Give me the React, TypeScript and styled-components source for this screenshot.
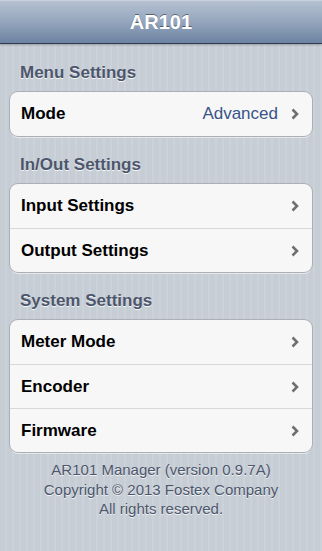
import React from 'react';
import styled, { createGlobalStyle } from 'styled-components';

const GlobalStyle = createGlobalStyle`
  html, body {
    margin: 0;
    padding: 0;
  }
  body {
    font-family: "Liberation Sans", Arial, sans-serif;
    -webkit-font-smoothing: antialiased;
  }
`;

const Screen = styled.div`
  width: 322px;
  height: 551px;
  overflow: hidden;
  display: flex;
  flex-direction: column;
  background: repeating-linear-gradient(
    90deg,
    #c6cdd5 0px,
    #c6cdd5 5px,
    #ccd2d9 5px,
    #ccd2d9 7px
  );
`;

const NavBar = styled.header`
  height: 44px;
  flex: none;
  box-sizing: border-box;
  display: flex;
  align-items: center;
  justify-content: center;
  background: linear-gradient(to bottom, #b5c1d1 0%, #94a5bd 50%, #6c83a2 100%);
  border-top: 1px solid #c8d1dd;
  border-bottom: 1px solid #2f3c50;
  box-shadow: 0 1px 2px rgba(0, 0, 0, 0.25);
`;

const Title = styled.h1`
  margin: 0;
  font-size: 20px;
  font-weight: bold;
  color: #fff;
  text-shadow: 0 -1px 0 rgba(0, 0, 0, 0.45);
`;

const Content = styled.main`
  display: flex;
  flex-direction: column;
`;

const SectionHeader = styled.h2`
  margin: 0;
  padding: 18px 20px 9px;
  font-size: 17px;
  line-height: 21px;
  font-weight: bold;
  color: #4c566c;
  text-shadow: 0 1px 0 rgba(255, 255, 255, 0.8);
`;

const Group = styled.ul`
  list-style: none;
  margin: 0 10px;
  padding: 0;
  background: #f7f7f7;
  border-radius: 8px;
  box-shadow: 0 0 0 1px #abb0b6, 0 2px 0 rgba(255, 255, 255, 0.55);
`;

const Row = styled.li`
  height: 44px;
  box-sizing: border-box;
  display: flex;
  align-items: center;
  padding: 0 13px 0 11px;
  & + & {
    border-top: 1px solid #d8d8d8;
  }
`;

const Label = styled.span`
  flex: 1;
  font-size: 17px;
  font-weight: bold;
  color: #000;
`;

const Value = styled.span`
  font-size: 17px;
  color: #385487;
  margin-right: 13px;
`;

const Footer = styled.footer`
  padding-top: 8px;
  text-align: center;
  font-size: 15px;
  line-height: 19.5px;
  color: #4c566c;
  text-shadow: 0 1px 0 rgba(255, 255, 255, 0.75);
`;

const Chevron = () => (
  <svg width="8" height="12" viewBox="0 0 8 12">
    <polyline
      points="1.5,1.5 6,6 1.5,10.5"
      fill="none"
      stroke="#6f6f6f"
      strokeWidth="2.6"
      strokeLinecap="butt"
      strokeLinejoin="miter"
    />
  </svg>
);

type Item = { label: string; value?: string };

const sections: { title: string; items: Item[] }[] = [
  { title: 'Menu Settings', items: [{ label: 'Mode', value: 'Advanced' }] },
  {
    title: 'In/Out Settings',
    items: [{ label: 'Input Settings' }, { label: 'Output Settings' }],
  },
  {
    title: 'System Settings',
    items: [{ label: 'Meter Mode' }, { label: 'Encoder' }, { label: 'Firmware' }],
  },
];

export default function App() {
  return (
    <>
      <GlobalStyle />
      <Screen>
        <NavBar>
          <Title>AR101</Title>
        </NavBar>
        <Content>
          {sections.map((s) => (
            <React.Fragment key={s.title}>
              <SectionHeader>{s.title}</SectionHeader>
              <Group>
                {s.items.map((it) => (
                  <Row key={it.label}>
                    <Label>{it.label}</Label>
                    {it.value && <Value>{it.value}</Value>}
                    <Chevron />
                  </Row>
                ))}
              </Group>
            </React.Fragment>
          ))}
          <Footer>
            AR101 Manager (version 0.9.7A)
            <br />
            Copyright © 2013 Fostex Company
            <br />
            All rights reserved.
          </Footer>
        </Content>
      </Screen>
    </>
  );
}
